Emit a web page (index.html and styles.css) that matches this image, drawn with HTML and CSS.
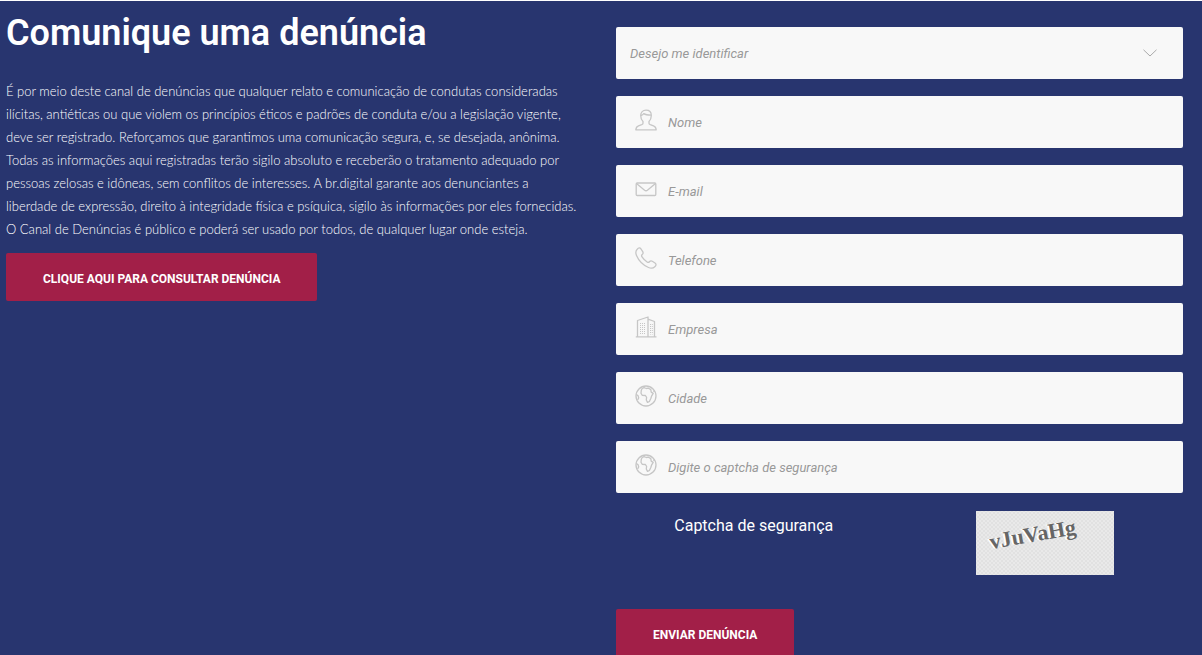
FILE: index.html
```
<!DOCTYPE html>
<html lang="pt-BR">
<head>
    <meta charset="UTF-8">
    <meta name="viewport" content="width=device-width, initial-scale=1.0">
    <title>Canal de Denúncias</title>
    <link rel="stylesheet" href="styles.css">
</head>
<body>
    <main class="report">
        <section class="intro">
            <h1>Comunique uma denúncia</h1>
            <p>
                É por meio deste canal de denúncias que qualquer relato e comunicação de condutas consideradas<br>
                ilícitas, antiéticas ou que violem os princípios éticos e padrões de conduta e/ou a legislação vigente,<br>
                deve ser registrado. Reforçamos que garantimos uma comunicação segura, e, se desejada, anônima.<br>
                Todas as informações aqui registradas terão sigilo absoluto e receberão o tratamento adequado por<br>
                pessoas zelosas e idôneas, sem conflitos de interesses. A br.digital garante aos denunciantes a<br>
                liberdade de expressão, direito à integridade física e psíquica, sigilo às informações por eles fornecidas.<br>
                O Canal de Denúncias é público e poderá ser usado por todos, de qualquer lugar onde esteja.
            </p>
            <button type="button" class="btn">CLIQUE AQUI PARA CONSULTAR DENÚNCIA</button>
        </section>

        <form class="form">
            <!-- Identificação -->
            <div class="field">
                <select aria-label="Identificação">
                    <option>Desejo me identificar</option>
                    <option>Não desejo me identificar</option>
                </select>
                <svg class="arrow" viewBox="0 0 14 8"><path d="M.5 .8 7 7 13.500 .8"/></svg>
            </div>

            <!-- Dados de contato -->
            <label class="field">
                <svg class="icon" viewBox="0 0 22 22">
                    <path d="M8 12.500C6.500 11 5.700 9 5.700 6.500 5.700 3.200 7.800 1.200 11 1.200s5.300 2 5.300 5.300c0 2.500-.8 4.500-2.300 6v1.700c0 .8.500 1.200 1.300 1.500l3.200 1.100c1.800.6 2.500 1.700 2.700 4H.8c.2-2.300.9-3.400 2.700-4l3.200-1.100c.8-.3 1.300-.7 1.300-1.500z"/>
                    <path d="M5.800 6.500C7.300 6.400 8.300 5.700 8.800 4.600c1.800 1.300 4.600 1.500 7.400 1.500"/>
                </svg>
                <input type="text" placeholder="Nome">
            </label>
            <label class="field">
                <svg class="icon" viewBox="0 0 22 22">
                    <rect x="1.200" y="5" width="19.600" height="12.500" rx="1"/>
                    <path d="M1.500 5.600 9.600 12.200c.9.700 1.900.7 2.800 0L20.500 5.600"/>
                </svg>
                <input type="email" placeholder="E-mail">
            </label>
            <label class="field">
                <svg class="icon" viewBox="0 0 22 22">
                    <path d="M2.200 2.200C3.600.6 5 .6 6 2l1.700 2.700c.8 1.300.5 2-.5 2.900-.8.700-.8 1.400-.2 2.300 1.400 2.100 3 3.700 5.100 5.100.9.600 1.600.6 2.300-.2.900-1 1.600-1.300 2.900-.5L20 16c1.400 1 1.400 2.400-.2 3.800-1.600 1.500-3.700 1.800-6.300.7C8.400 18.300 3.700 13.600 1.500 8.500.4 5.900.7 3.800 2.200 2.200z"/>
                </svg>
                <input type="tel" placeholder="Telefone">
            </label>
            <label class="field">
                <svg class="icon" viewBox="0 0 22 22">
                    <path d="M.8 20.800h20.700M2.500 20.800V4.500L13 1v19.800M13 3.200l6.500 2.300v15.300"/>
                    <path class="thin" d="M5 7.500h5.500M5 9.500h5.500M5 11.500h5.500M5 13.500h5.500M5 15.500h5.500M5 17.500h5.500M15.500 8v10.500M17.300 8v10.500"/>
                </svg>
                <input type="text" placeholder="Empresa">
            </label>
            <label class="field">
                <svg class="icon" viewBox="0 0 22 22">
                    <circle cx="11" cy="11" r="10"/>
                    <path d="M7.200 3.500 9 2.700l2.300.8 2.200-.3 2.300 1.400.4 2.500 2 1.300-1.500 2.400-.8 2.500-1.500 3.200-1.900.9-1.200-2.400.3-2.700-1.200-1.800-3.200-.2L6 8.200l.3-2.900zM1.400 9.500l1.700 1.200.6 2.300-1.100 2M19.600 6l-1.400.4"/>
                </svg>
                <input type="text" placeholder="Cidade">
            </label>

            <!-- Captcha -->
            <label class="field">
                <svg class="icon" viewBox="0 0 22 22">
                    <circle cx="11" cy="11" r="10"/>
                    <path d="M7.200 3.500 9 2.700l2.300.8 2.200-.3 2.300 1.400.4 2.500 2 1.300-1.500 2.400-.8 2.500-1.500 3.200-1.900.9-1.200-2.400.3-2.700-1.200-1.800-3.200-.2L6 8.200l.3-2.900zM1.400 9.500l1.700 1.200.6 2.300-1.100 2M19.600 6l-1.400.4"/>
                </svg>
                <input type="text" placeholder="Digite o captcha de segurança">
            </label>
            <div class="captcha">
                <span>Captcha de segurança</span>
                <svg class="captcha-image" viewBox="0 0 138 64">
                    <defs>
                        <pattern id="grain" width="4" height="4" patternUnits="userSpaceOnUse">
                            <path d="M0 0l4 4M4 0L0 4" stroke="#dedede" stroke-width=".7"/>
                        </pattern>
                    </defs>
                    <rect width="138" height="64" fill="#e9e9e9"/>
                    <rect width="138" height="64" fill="url(#grain)"/>
                    <text class="captcha-shadow" transform="rotate(-10 14 38)" x="13" y="38">vJuVaHg</text>
                    <text class="captcha-text" transform="rotate(-10 16 38)" x="15" y="38">vJuVaHg</text>
                </svg>
            </div>

            <button type="submit" class="btn">ENVIAR DENÚNCIA</button>
        </form>
    </main>
</body>
</html>
```
FILE: styles.css
```
* {
    box-sizing: border-box;
}
body {
    margin: 0;
    background: #28356f;
    color: #fff;
    font-family: Roboto, Arial, sans-serif;
}
.report {
    display: grid;
    grid-template-columns: 1fr 1fr;
    gap: 43px;
    height: 100vh;
    overflow: hidden;
    padding: 0 19px 0 6px;
    border-top: 1px solid #fff;
}
.intro {
    min-width: 0;
    padding-top: 10px;
}
h1 {
    margin: 0 0 25px;
    font-size: 36px;
    font-weight: 600;
    line-height: 44px;
}
.intro p {
    margin: 0 0 12px;
    font-family: Lato, Arial, sans-serif;
    font-size: 13px;
    font-weight: 300;
    line-height: 23px;
    white-space: nowrap;
}
.btn {
    height: 48px;
    padding: 4px 37px 0;
    border: none;
    border-radius: 2px;
    background: #a21f48;
    color: #fff;
    font-family: inherit;
    font-size: 12px;
    font-weight: 700;
    cursor: pointer;
}
.btn:hover {
    background: #8a193c;
}
.form {
    min-width: 0;
    padding-top: 26px;
}
.field {
    position: relative;
    display: flex;
    align-items: center;
    height: 52px;
    margin-bottom: 17px;
    border-radius: 2px;
    background: #f8f8f8;
}
.field input,
.field select {
    flex: 1;
    min-width: 0;
    height: 100%;
    padding: 0 14px 0 11px;
    border: none;
    outline: none;
    background: none;
    color: #999;
    font-family: inherit;
    font-size: 13px;
    font-style: italic;
}
.field select {
    padding-left: 14px;
    appearance: none;
}
.field input::placeholder {
    color: #999;
}
.icon {
    flex: none;
    width: 22px;
    height: 22px;
    margin: 0 0 4px 19px;
    fill: none;
    stroke: #c6c6c6;
    stroke-width: 1.3;
    stroke-linejoin: round;
}
.icon .thin {
    stroke-width: 1;
    stroke-dasharray: 1 1;
}
.arrow {
    position: absolute;
    right: 26px;
    width: 14px;
    height: 8px;
    fill: none;
    stroke: #aaa;
    pointer-events: none;
}
.captcha {
    display: grid;
    grid-template-columns: 1fr 1fr;
    justify-items: center;
    margin: 18px -8px 34px;
    font-size: 16px;
    line-height: 30px;
}
.captcha-image {
    width: 138px;
    height: 64px;
}
.captcha-text,
.captcha-shadow {
    font-family: "Liberation Serif", "Times New Roman", serif;
    font-size: 22px;
    font-weight: 700;
    fill: #666;
}
.captcha-shadow {
    fill: #fff;
}
```
